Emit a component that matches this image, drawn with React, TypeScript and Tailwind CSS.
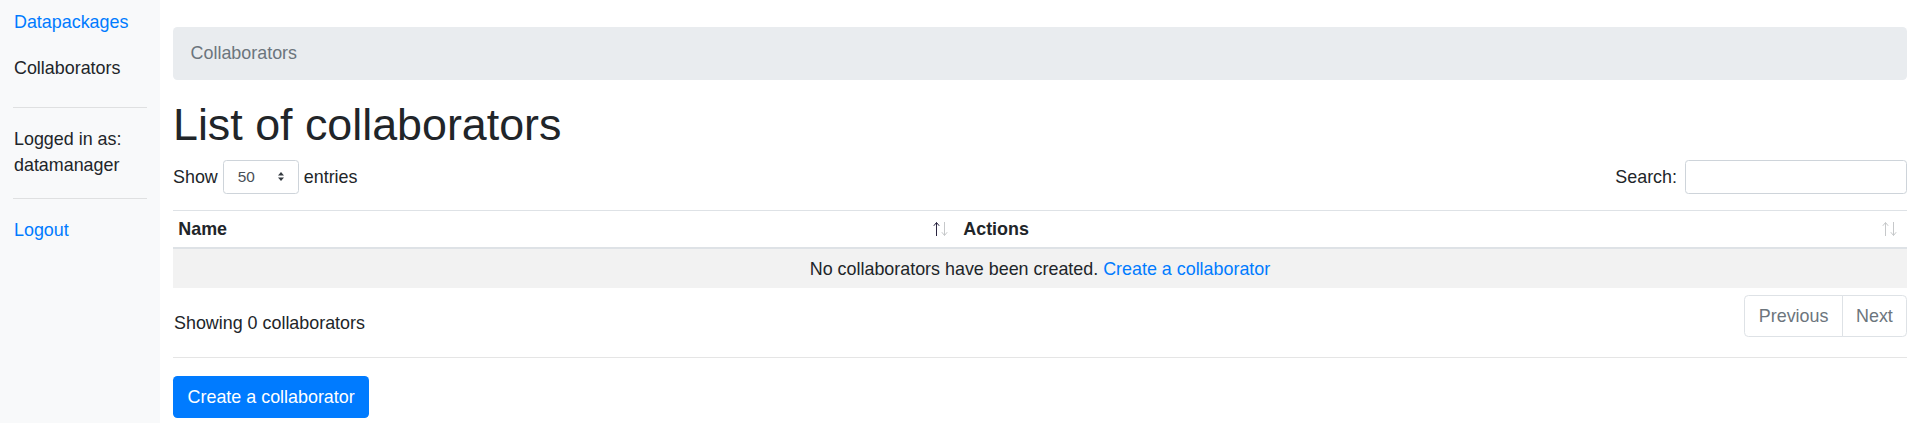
const font = { fontFamily: '"Liberation Sans", Arial, sans-serif' };

function SortArrow({ dir, dark }: { dir: "up" | "down"; dark?: boolean }) {
  return (
    <svg
      width="7"
      height="16"
      viewBox="0 0 7 16"
      className={dark ? "text-[#2a2540]" : "text-[#c6c8ca]"}
      fill="none"
      stroke="currentColor"
      strokeWidth="1"
    >
      {dir === "up" ? (
        <path d="M3.5 1.5V15M0.8 4.8l2.7-3.3 2.7 3.3" />
      ) : (
        <path d="M3.5 1V14.5M0.8 11.2l2.7 3.3 2.7-3.3" />
      )}
    </svg>
  );
}

function SortIcons({ active }: { active?: boolean }) {
  return (
    <span className="flex items-center gap-px">
      <SortArrow dir="up" dark={active} />
      <SortArrow dir="down" />
    </span>
  );
}

function Sidebar() {
  return (
    <aside className="w-[160px] shrink-0 bg-[#f8f9fa] px-[13px] pt-[9px] text-[17.9px] leading-[26.4px]">
      <a className="block pl-px text-[#007bff]" href="#">
        Datapackages
      </a>
      <div className="mt-[20px] pl-px text-[#212529]">Collaborators</div>
      <hr className="mt-[25px] border-0 border-t border-[#dfe0e1]" />
      <div className="mt-[18px] pl-px text-[#212529]">
        Logged in as:
        <br />
        datamanager
      </div>
      <hr className="mt-[19px] border-0 border-t border-[#dfe0e1]" />
      <a className="mt-[18px] block pl-px text-[#007bff]" href="#">
        Logout
      </a>
    </aside>
  );
}

export default function App() {
  return (
    <div className="flex h-[423px] w-full overflow-hidden bg-white text-[#212529]" style={font}>
      <Sidebar />
      <main className="min-w-0 flex-1 pl-[13px] pr-[12px] pt-[27px] text-[17.9px] leading-[26.4px]">
        <nav className="flex h-[53px] items-center rounded-[4.4px] bg-[#e9ecef] px-[17.6px] text-[#6c757d]">
          Collaborators
        </nav>

        <h1 className="mt-[18px] text-[44.8px] font-normal leading-[52.8px]">List of collaborators</h1>

        <div className="mt-[9px] flex items-center justify-between">
          <label className="flex items-center">
            <span>Show</span>
            <span className="ml-[5px] flex h-[34px] w-[76px] items-center justify-between rounded-[3.5px] border border-[#ced4da] pl-[14px] pr-[14px] text-[15.4px] text-[#495057]">
              50
              <svg width="6" height="9" viewBox="0 0 6 9" fill="#343a40">
                <path d="M3 0L6 3.4H0z" />
                <path d="M3 9L0 5.6h6z" />
              </svg>
            </span>
            <span className="ml-[5px]">entries</span>
          </label>
          <label className="flex items-center">
            <span>Search:</span>
            <span className="ml-[8px] block h-[34px] w-[222px] rounded-[3.5px] border border-[#ced4da]" />
          </label>
        </div>

        <table className="mt-[16px] w-full border-collapse">
          <thead>
            <tr className="border-t border-b-2 border-[#dee2e6]">
              <th className="h-[38px] w-[785px] px-[5.3px] text-left font-bold">
                <div className="flex items-center justify-between pr-[5px]">
                  <span>Name</span>
                  <SortIcons active />
                </div>
              </th>
              <th className="h-[38px] px-[5.3px] text-left font-bold">
                <div className="flex items-center justify-between pr-[5px]">
                  <span>Actions</span>
                  <SortIcons />
                </div>
              </th>
            </tr>
          </thead>
          <tbody>
            <tr className="bg-[#f2f2f2]">
              <td colSpan={2} className="h-[40px] px-[5.3px] text-center">
                No collaborators have been created.{" "}
                <a className="text-[#007bff]" href="#">
                  Create a collaborator
                </a>
              </td>
            </tr>
          </tbody>
        </table>

        <div className="mt-[7px] flex items-start justify-between">
          <div className="pt-[15px] pl-px">Showing 0 collaborators</div>
          <div className="flex text-[#6c757d]">
            <span className="flex h-[42px] items-center rounded-l-[4.4px] border border-[#dee2e6] px-[13.4px] leading-[22px]">
              Previous
            </span>
            <span className="-ml-px flex h-[42px] items-center rounded-r-[4.4px] border border-[#dee2e6] px-[13.2px] leading-[22px]">
              Next
            </span>
          </div>
        </div>

        <hr className="mt-[20px] border-0 border-t border-[#e5e5e5]" />

        <button
          type="button"
          className="mt-[18px] h-[42px] rounded-[4.4px] bg-[#007bff] px-[14.6px] text-[17.9px] text-white"
        >
          Create a collaborator
        </button>
      </main>
    </div>
  );
}
